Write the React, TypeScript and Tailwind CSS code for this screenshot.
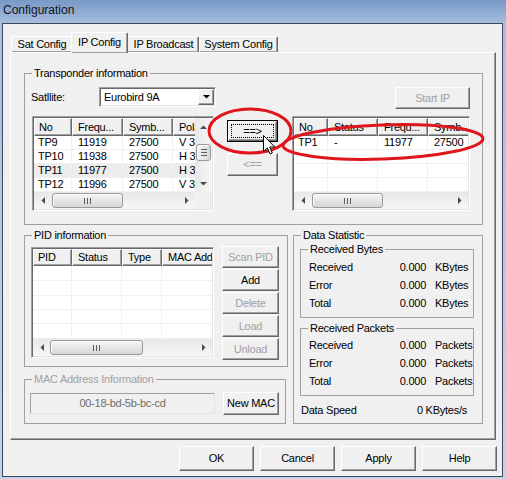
import React from "react";

// ── Shared 3D borders (classic Windows look) ────────────────────────────────
const raised =
  "border border-t-white border-l-white border-r-[#696969] border-b-[#696969] shadow-[inset_-1px_-1px_0_#a0a0a0]";
const sunken =
  "border border-t-[#a0a0a0] border-l-[#a0a0a0] border-r-white border-b-white shadow-[inset_1px_1px_0_#696969,inset_-1px_-1px_0_#e3e3e3]";

type Dir = "l" | "r" | "u" | "d";

function Arrow({ dir, color = "#4a4a4a" }: { dir: Dir; color?: string }) {
  const horiz = dir === "l" || dir === "r";
  const pts = {
    l: "4,0 4,7 0.5,3.5",
    r: "0,0 0,7 3.5,3.5",
    u: "0,4 7,4 3.5,0.5",
    d: "0,0 7,0 3.5,3.5",
  }[dir];
  return (
    <svg width={horiz ? 4 : 7} height={horiz ? 7 : 4} viewBox={horiz ? "0 0 4 7" : "0 0 7 4"}>
      <polygon points={pts} fill={color} />
    </svg>
  );
}

function Btn({
  children,
  className = "",
  disabled = false,
}: {
  children: React.ReactNode;
  className?: string;
  disabled?: boolean;
}) {
  return (
    <button
      type="button"
      className={`flex shrink-0 items-center justify-center bg-[#f0f0f0] ${raised} ${
        disabled ? "text-[#a0a0a0]" : "text-black"
      } ${className}`}
    >
      {children}
    </button>
  );
}

// Default + focused push button: black frame and dotted focus rectangle
function DefaultBtn({ children, className = "" }: { children: React.ReactNode; className?: string }) {
  return (
    <div className={`border border-black ${className}`}>
      <button type="button" className={`flex h-full w-full bg-[#f0f0f0] p-[2px] ${raised}`}>
        <span className="flex h-full w-full items-center justify-center border border-dotted border-black">
          {children}
        </span>
      </button>
    </div>
  );
}

function Grip({ vertical = false }: { vertical?: boolean }) {
  return (
    <div className={`flex gap-[2px] ${vertical ? "flex-col" : ""}`}>
      {[0, 1, 2].map((i) => (
        <span key={i} className={vertical ? "h-px w-[6px] bg-[#5c5c5c]" : "h-[6px] w-px bg-[#5c5c5c]"} />
      ))}
    </div>
  );
}

function HScroll({ thumb, className = "" }: { thumb: string; className?: string }) {
  return (
    <div className={`flex h-[17px] shrink-0 bg-linear-to-b from-[#e8e8e8] to-[#f7f7f7] ${className}`}>
      <div className="flex w-[17px] shrink-0 items-center justify-center">
        <Arrow dir="l" />
      </div>
      <div className="flex min-w-0 flex-1 items-center">
        <div
          className={`flex h-[15px] items-center justify-center rounded-[3px] border border-[#9a9a9a] bg-linear-to-b from-[#f6f6f6] to-[#d6d6d6] shadow-[inset_1px_1px_0_#fff] ${thumb}`}
        >
          <Grip />
        </div>
      </div>
      <div className="flex w-[17px] shrink-0 items-center justify-center">
        <Arrow dir="r" />
      </div>
    </div>
  );
}

function VScroll() {
  return (
    <div className="flex w-[17px] shrink-0 flex-col bg-linear-to-r from-[#e8e8e8] to-[#f7f7f7]">
      <div className="flex h-[17px] shrink-0 items-center justify-center">
        <Arrow dir="u" />
      </div>
      <div className="flex flex-1 flex-col items-center">
        <div className="mt-[9px] flex h-[17px] w-[15px] items-center justify-center rounded-[3px] border border-[#9a9a9a] bg-linear-to-r from-[#f6f6f6] to-[#d6d6d6] shadow-[inset_1px_1px_0_#fff]">
          <Grip vertical />
        </div>
      </div>
      <div className="flex h-[17px] shrink-0 items-center justify-center">
        <Arrow dir="d" />
      </div>
    </div>
  );
}

// ── List view (report mode with grid lines) ─────────────────────────────────
type Col = { title: string; w: string };

function ListView({
  cols,
  rows,
  rowH,
  headerH,
  thumb,
  vscroll = false,
  selected = -1,
  className = "",
}: {
  cols: Col[];
  rows: string[][];
  rowH: string[];
  headerH: string;
  thumb: string;
  vscroll?: boolean;
  selected?: number;
  className?: string;
}) {
  return (
    <div className={`flex shrink-0 flex-col bg-white p-px ${sunken} ${className}`}>
      <div className="flex min-h-0 flex-1">
        <div className="flex min-w-0 flex-1 flex-col overflow-hidden">
          <div className={`flex shrink-0 ${headerH}`}>
            {cols.map((c, i) => (
              <div
                key={c.title}
                className={`flex shrink-0 items-center overflow-hidden whitespace-nowrap bg-[#f0f0f0] ${raised} ${c.w} ${
                  i === 0 ? "pl-[4px]" : "pl-[5px]"
                }`}
              >
                {c.title}
              </div>
            ))}
          </div>
          {rowH.map((h, r) => (
            <div key={r} className={`flex shrink-0 ${h} ${r === selected ? "bg-[#ececec]" : ""}`}>
              {cols.map((c, i) => (
                <div
                  key={c.title}
                  className={`flex shrink-0 items-center overflow-hidden whitespace-nowrap border-r border-b border-[#f0f0f0] ${c.w} ${
                    i === 0 ? "pl-[4px]" : "pl-[6px]"
                  }`}
                >
                  {rows[r]?.[i] ?? ""}
                </div>
              ))}
            </div>
          ))}
        </div>
        {vscroll && <VScroll />}
      </div>
      <div className="flex shrink-0">
        <HScroll thumb={thumb} className="flex-1" />
        {vscroll && <div className="w-[17px] bg-[#f0f0f0]" />}
      </div>
    </div>
  );
}

// ── Group box (etched frame with caption on the line) ───────────────────────
function GroupBox({
  label,
  className = "",
  disabled = false,
  children,
}: {
  label: string;
  className?: string;
  disabled?: boolean;
  children: React.ReactNode;
}) {
  return (
    <div className={`flex shrink-0 flex-col border border-[#a0a0a0] ${className}`}>
      <span
        className={`-mt-[7px] ml-[7px] w-fit bg-[#f0f0f0] px-[2px] leading-[13px] ${
          disabled ? "text-[#a0a0a0]" : "text-black"
        }`}
      >
        {label}
      </span>
      {children}
    </div>
  );
}

function StatRow({ label, value, unit }: { label: string; value: string; unit: string }) {
  return (
    <div className="flex h-[18px] items-center pl-[8px]">
      <span>{label}</span>
      <span className="ml-auto">{value}</span>
      <span className="ml-[9px] w-[38px]">{unit}</span>
    </div>
  );
}

// ── Data ────────────────────────────────────────────────────────────────────
const satCols: Col[] = [
  { title: "No", w: "w-[38px]" },
  { title: "Frequ...", w: "w-[51px]" },
  { title: "Symb...", w: "w-[50px]" },
  { title: "Pola", w: "w-[50px]" },
];
const satRows = [
  ["TP9", "11919", "27500", "V 34500"],
  ["TP10", "11938", "27500", "H 34500"],
  ["TP11", "11977", "27500", "H 34500"],
  ["TP12", "11996", "27500", "V 34500"],
];

const ipCols: Col[] = [
  { title: "No", w: "w-[34px]" },
  { title: "Status", w: "w-[50px]" },
  { title: "Frequ...", w: "w-[50px]" },
  { title: "Symb...", w: "w-[50px]" },
];
const ipRows = [["TP1", "-", "11977", "27500"]];

const pidCols: Col[] = [
  { title: "PID", w: "w-[39px]" },
  { title: "Status", w: "w-[50px]" },
  { title: "Type", w: "w-[40px]" },
  { title: "MAC Add", w: "w-[60px]" },
];

const rows14 = ["h-[14px]", "h-[14px]", "h-[14px]", "h-[14px]"];
const pidRowH = ["h-[15px]", "h-[15px]", "h-[14px]", "h-[14px]", "h-[15px]"];

// ── Page ────────────────────────────────────────────────────────────────────
export default function App() {
  return (
    <div className="relative flex h-[479px] w-[506px] flex-col overflow-hidden bg-linear-to-b from-[#7898c7] via-[#a9bfe0] via-5% to-[#c2d3ea] font-['Liberation_Sans',Arial,sans-serif] text-[11px] tracking-[-0.25px] text-black">
      {/* Title bar */}
      <div className="flex h-[23px] shrink-0 items-center pb-[3px] pl-[3px] text-[12px] tracking-normal text-[#141414]">
        Configuration
      </div>

      {/* Client area */}
      <div className="ml-[2px] flex h-[454px] w-[501px] shrink-0 flex-col border border-[#3b4859] bg-[#f0f0f0]">
        {/* Tabs */}
        <div className="flex h-[28px] shrink-0 items-end pl-[8px]">
          <div className={`flex h-[16px] w-[62px] items-center justify-center rounded-t-[2px] border-b-0 ${raised}`}>
            Sat Config
          </div>
          <div
            className={`relative z-10 -mx-[2px] -mb-px flex h-[21px] w-[57px] items-center justify-center rounded-t-[2px] border-b-0 bg-[#f0f0f0] pb-[2px] ${raised}`}
          >
            IP Config
          </div>
          <div className={`flex h-[16px] w-[73px] items-center justify-center rounded-t-[2px] border-b-0 pl-[2px] ${raised}`}>
            IP Broadcast
          </div>
          <div className={`flex h-[16px] w-[79px] items-center justify-center rounded-t-[2px] border-b-0 ${raised}`}>
            System Config
          </div>
        </div>

        {/* Tab panel */}
        <div className={`ml-[7px] flex h-[388px] w-[486px] shrink-0 flex-col pl-[13px] ${raised}`}>
          {/* Transponder information */}
          <GroupBox label="Transponder information" className="mt-[20px] h-[152px] w-[459px]">
            <div className="mt-[7px] flex h-[22px] items-start pl-[6px]">
              <span className="flex h-[20px] w-[68px] items-center">Satllite:</span>
              <div className={`flex h-[20px] w-[117px] items-center bg-white p-px ${sunken}`}>
                <span className="flex-1 pl-[3px]">Eurobird 9A</span>
                <div className={`flex h-[16px] w-[16px] items-center justify-center bg-[#f0f0f0] ${raised}`}>
                  <Arrow dir="d" color="#000" />
                </div>
              </div>
              <Btn disabled className="mr-[12px] ml-auto h-[22px] w-[75px]">
                Start IP
              </Btn>
            </div>
            <div className="mt-[7px] flex items-start pl-[7px]">
              <ListView
                cols={satCols}
                rows={satRows}
                rowH={rows14}
                headerH="h-[18px]"
                thumb="ml-[1px] w-[71px]"
                vscroll
                selected={2}
                className="h-[95px] w-[182px]"
              />
              <div className="mt-[4px] ml-[13px] flex w-[51px] flex-col gap-[11px]">
                <DefaultBtn className="h-[22px] w-[51px]">==&gt;</DefaultBtn>
                <Btn disabled className="h-[23px] w-[51px]">
                  &lt;==
                </Btn>
              </div>
              <ListView
                cols={ipCols}
                rows={ipRows}
                rowH={rows14}
                headerH="h-[18px]"
                thumb="ml-[1px] w-[71px]"
                className="ml-[14px] h-[95px] w-[178px]"
              />
            </div>
          </GroupBox>

          <div className="mt-[10px] flex items-start gap-[5px]">
            {/* Left column */}
            <div className="flex w-[264px] flex-col">
              <GroupBox label="PID information" className="h-[132px] w-[264px]">
                <div className="mt-[4px] flex items-start pl-[6px]">
                  <ListView
                    cols={pidCols}
                    rows={[]}
                    rowH={pidRowH}
                    headerH="h-[17px]"
                    thumb="w-[93px]"
                    className="mt-px h-[111px] w-[183px]"
                  />
                  <div className="ml-[8px] flex w-[57px] flex-col gap-px">
                    <Btn disabled className="h-[22px] w-[57px]">
                      Scan PID
                    </Btn>
                    <Btn className="h-[22px] w-[57px]">Add</Btn>
                    <Btn disabled className="h-[22px] w-[57px]">
                      Delete
                    </Btn>
                    <Btn disabled className="h-[22px] w-[57px]">
                      Load
                    </Btn>
                    <Btn disabled className="h-[22px] w-[57px]">
                      Unload
                    </Btn>
                  </div>
                </div>
              </GroupBox>

              <GroupBox label="MAC Address Information" disabled className="mt-[12px] h-[45px] w-[262px]">
                <div className="mt-[6px] flex h-[23px] items-center pl-[5px]">
                  <div className="flex h-[21px] w-[185px] items-center justify-center border border-t-[#a0a0a0] border-l-[#a0a0a0] border-r-[#e3e3e3] border-b-[#e3e3e3] bg-[#f0f0f0] text-[#6d6d6d]">
                    00-18-bd-5b-bc-cd
                  </div>
                  <Btn className="ml-[8px] h-[23px] w-[56px]">New MAC</Btn>
                </div>
              </GroupBox>
            </div>

            {/* Data Statistic */}
            <GroupBox label="Data Statistic" className="h-[189px] w-[190px]">
              <GroupBox label="Received Bytes" className="mt-[7px] ml-[6px] h-[69px] w-[174px]">
                <div className="pt-[2px]">
                  <StatRow label="Received" value="0.000" unit="KBytes" />
                  <StatRow label="Error" value="0.000" unit="KBytes" />
                  <StatRow label="Total" value="0.000" unit="KBytes" />
                </div>
              </GroupBox>
              <GroupBox label="Received Packets" className="mt-[10px] ml-[6px] h-[68px] w-[174px]">
                <div className="pt-[1px]">
                  <StatRow label="Received" value="0.000" unit="Packets" />
                  <StatRow label="Error" value="0.000" unit="Packets" />
                  <StatRow label="Total" value="0.000" unit="Packets" />
                </div>
              </GroupBox>
              <div className="mt-[5px] flex h-[18px] items-center pr-[15px] pl-[7px]">
                <span>Data Speed</span>
                <span className="ml-auto">0 KBytes/s</span>
              </div>
            </GroupBox>
          </div>
        </div>

        {/* Dialog buttons */}
        <div className="mt-[6px] mr-[5px] flex justify-end gap-[6px]">
          <Btn className="h-[25px] w-[75px]">OK</Btn>
          <Btn className="h-[25px] w-[75px]">Cancel</Btn>
          <Btn className="h-[25px] w-[75px]">Apply</Btn>
          <Btn className="h-[25px] w-[75px]">Help</Btn>
        </div>
      </div>

      {/* Annotation: red ellipses and mouse pointer drawn over the dialog */}
      <svg className="pointer-events-none absolute top-0 left-0" width="506" height="479">
        <ellipse cx="250" cy="131" rx="41" ry="22" fill="none" stroke="#e0161d" strokeWidth="3" />
        <ellipse
          cx="383"
          cy="142"
          rx="100"
          ry="17"
          transform="rotate(-2 383 142)"
          fill="none"
          stroke="#e0161d"
          strokeWidth="3"
        />
        <path
          d="M263.5 135.5 V151.5 L267.3 147.9 L270 154 L272.3 153 L269.7 147 H274.8 Z"
          fill="#fff"
          stroke="#000"
          strokeWidth="1"
          strokeLinejoin="round"
        />
      </svg>
    </div>
  );
}
